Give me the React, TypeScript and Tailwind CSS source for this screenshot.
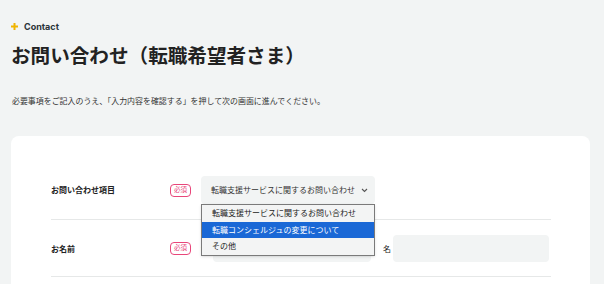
import { useState } from "react"

const options = [
  "転職支援サービスに関するお問い合わせ",
  "転職コンシェルジュの変更について",
  "その他",
]

function Required() {
  return (
    <span className="flex h-[13px] w-[21px] items-center justify-center rounded-[4px] border border-[#e8467a] text-[6.5px] leading-none text-[#e8467a]">
      必須
    </span>
  )
}

export default function App() {
  const [active] = useState(1)

  return (
    <div
      className="min-h-[284px] bg-[#f2f4f4] text-[#222] overflow-hidden"
      style={{ fontFamily: 'Inter, "Noto Sans CJK JP", sans-serif' }}
    >
      <div className="pl-[11px] pt-[20px]">
        {/* Eyebrow */}
        <div className="flex items-center gap-[6px] h-[12px]">
          <svg width="7" height="7" viewBox="0 0 7 7">
            <path d="M2.5 0h2v2.5H7v2H4.5V7h-2V4.5H0v-2h2.5z" fill="#f0b400" />
          </svg>
          <span className="text-[9px] font-bold leading-none text-[#2a3338]">Contact</span>
        </div>

        <h1 className="mt-[11px] text-[19.6px] font-bold leading-[26px]">
          お問い合わせ（転職希望者さま）
        </h1>

        <p className="mt-[26px] pl-px text-[7.95px] leading-[12px] text-[#333]">
          必要事項をご記入のうえ、「入力内容を確認する」を押して次の画面に進んでください。
        </p>
      </div>

      {/* Form card */}
      <div className="ml-[11px] mr-[14px] mt-[29px] rounded-[8px] bg-white px-[40px] pt-[24px] pb-[40px]">
        <div className="w-[500px]">
          {/* Row 1 */}
          <div className="flex items-center border-b border-[#e6e8e8] pt-[16px] pb-[15px]">
            <div className="w-[119px] text-[8px] font-bold">お問い合わせ項目</div>
            <Required />
            <div className="relative ml-[10px]">
              <div className="flex h-[28px] w-[174px] items-center justify-between rounded-[4px] bg-[#f2f4f4] pl-[10px] pr-[7px] text-[8px] text-[#333]">
                <span>転職支援サービスに関するお問い合わせ</span>
                <svg width="7" height="5" viewBox="0 0 7 5" className="ml-[4px]">
                  <path d="M1 1l2.5 2.5L6 1" stroke="#555" strokeWidth="1.1" fill="none" />
                </svg>
              </div>
              {/* open listbox */}
              <ul className="absolute left-0 top-[28px] z-10 w-[174px] border border-[#7a7a7a] bg-[#f3f4f4] text-[8px] text-[#222] shadow-sm">
                {options.map((o, i) => (
                  <li
                    key={o}
                    className={
                      i === active
                        ? "flex h-[16.5px] items-center bg-[#1a68d6] pl-[10px] text-white"
                        : "flex h-[16.5px] items-center pl-[10px]"
                    }
                  >
                    {o}
                  </li>
                ))}
              </ul>
            </div>
          </div>

          {/* Row 2 */}
          <div className="flex items-center border-b border-[#e6e8e8] pt-[15px] pb-[14px]">
            <div className="w-[119px] text-[8px] font-bold">お名前</div>
            <Required />
            <span className="ml-[10px] w-[12px] text-[8px]">姓</span>
            <div className="h-[27px] w-[158px] rounded-[4px] bg-[#f2f4f4]" />
            <span className="ml-[12px] w-[10px] text-[8px]">名</span>
            <div className="h-[27px] w-[156px] rounded-[4px] bg-[#f2f4f4]" />
          </div>
        </div>
      </div>
    </div>
  )
}
